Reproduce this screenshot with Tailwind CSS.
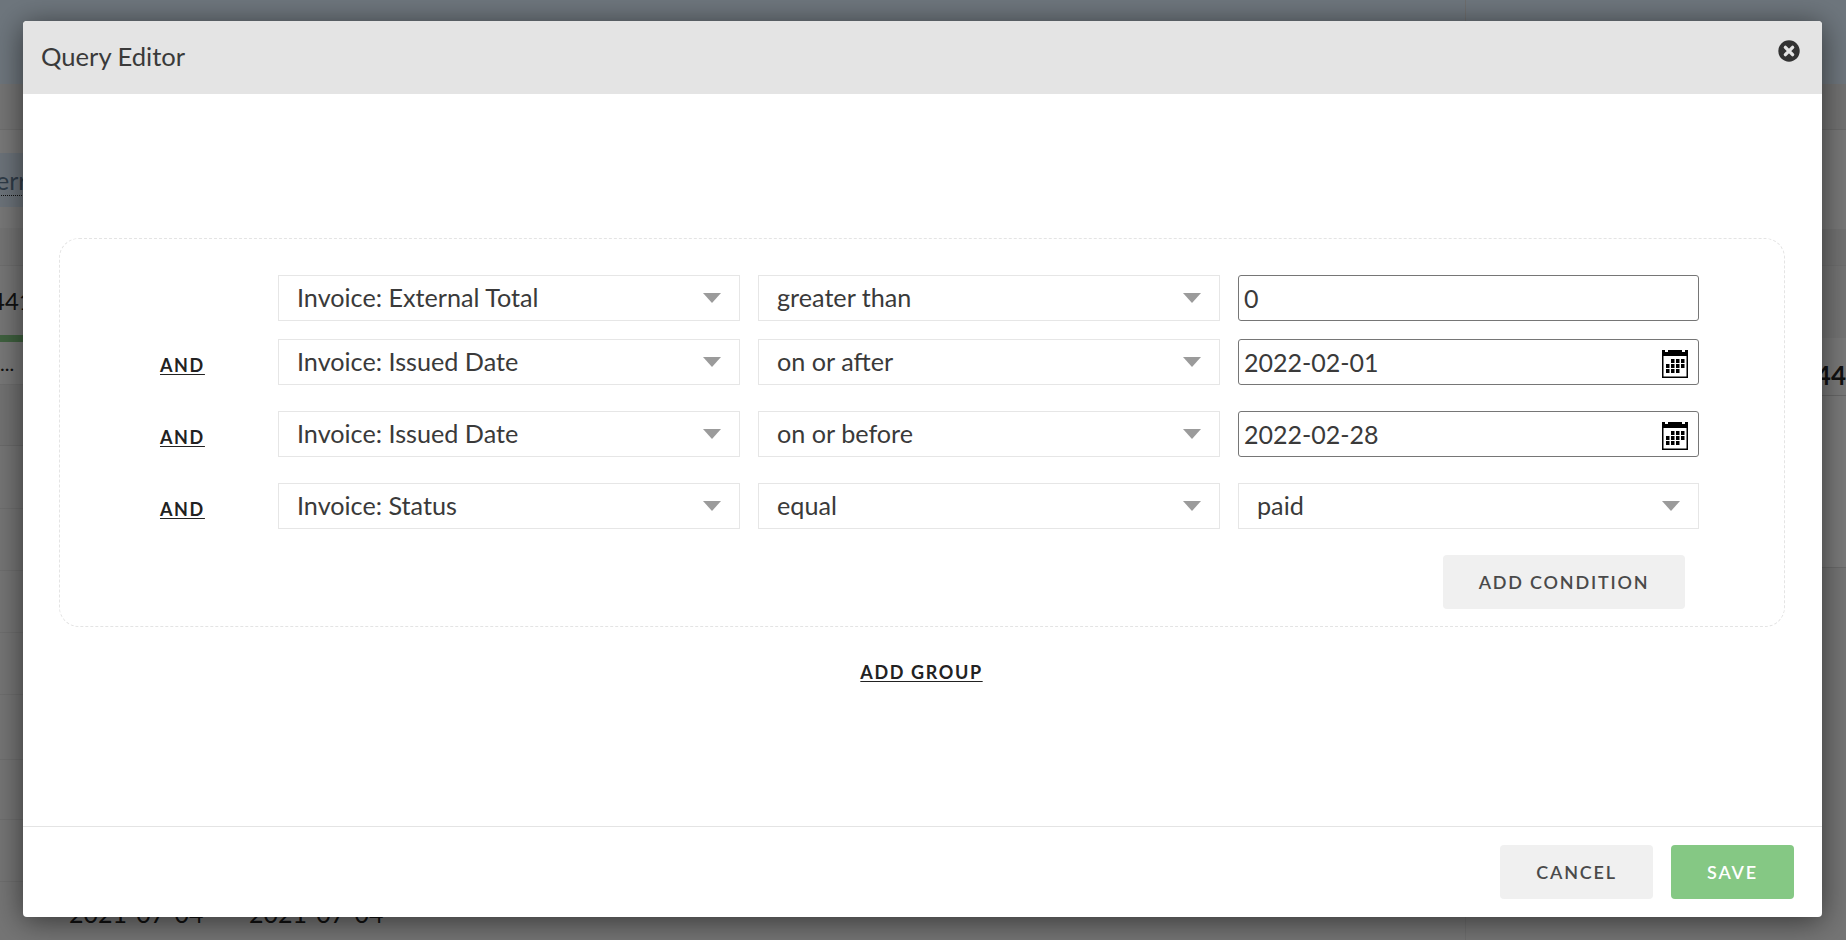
<!DOCTYPE html>
<html lang="en">
<head>
  <meta charset="UTF-8" />
  <title>Query Editor</title>
  <script src="https://cdn.jsdelivr.net/npm/@tailwindcss/browser@4"></script>
</head>
<body class="relative w-[1846px] h-[940px] overflow-hidden bg-[#ebebeb] font-['Lato',sans-serif] text-[#333]">
  <!-- page behind the modal -->
  <div class="flex h-full">
    <main class="w-[1465px] flex flex-col">
      <div class="h-[84px] shrink-0 bg-[#dcecfb]"></div>
      <div class="h-[46px] shrink-0 bg-[#ebebeb] border-b border-[#dcdcdc]"></div>
      <div class="h-[23px] shrink-0 bg-[#f2f2f2]"></div>
      <div class="h-[54px] shrink-0 bg-[#d8e6f5] overflow-hidden flex items-center">
        <span class="-ml-[4px] w-[40px] text-[25px] text-[#5f7890] border-b border-dotted border-[#222] leading-[30px]">err</span>
      </div>
      <div class="h-[21px] shrink-0 bg-[#f0f0f0]"></div>
      <div class="h-[38px] shrink-0 bg-[#e8e8e8] border-b border-[#dcdcdc]"></div>
      <div class="h-[69px] shrink-0 bg-[#ececec] overflow-hidden flex items-center pt-[1px]">
        <span class="-ml-[9px] text-[24px] text-[#222]">441</span>
      </div>
      <div class="h-[7px] shrink-0 bg-[#7fc27f]"></div>
      <div class="h-[43px] shrink-0 bg-[#f0f0f0] border-b border-[#dcdcdc] overflow-hidden flex items-center">
        <span class="text-[20px] leading-none text-[#222]">...</span>
      </div>
      <div class="h-[61px] shrink-0 bg-[#e4e4e4] border-b border-[#d4d4d4]"></div>
      <div class="h-[63px] shrink-0 border-b border-[#dcdcdc]"></div>
      <div class="h-[62px] shrink-0 border-b border-[#dcdcdc]"></div>
      <div class="h-[62px] shrink-0 border-b border-[#dcdcdc]"></div>
      <div class="h-[62px] shrink-0 border-b border-[#dcdcdc]"></div>
      <div class="h-[65px] shrink-0 border-b border-[#dcdcdc]"></div>
      <div class="h-[60px] shrink-0 border-b border-[#dcdcdc]"></div>
      <div class="h-[62px] shrink-0 border-b border-[#dcdcdc]"></div>
      <div class="flex-1 flex text-[25px] text-[#222] pt-[13px]">
        <span class="ml-[69px] w-[180px]">2021-07-04</span>
        <span>2021-07-04</span>
      </div>
    </main>
    <aside class="flex-1 flex flex-col border-l border-[#dcdcdc]">
      <div class="h-[84px] shrink-0 bg-[#dcecfb]"></div>
      <div class="h-[46px] shrink-0 bg-[#e4e4e4] border-b border-[#d4d4d4]"></div>
      <div class="h-[99px] shrink-0 bg-[#f0f0f0]"></div>
      <div class="h-[37px] shrink-0 bg-[#e4e4e4] border-b border-[#dcdcdc]"></div>
      <div class="h-[72px] shrink-0 bg-[#e8e8e8]"></div>
      <div class="h-[58px] shrink-0 bg-[#f2f2f2] border-b border-[#cfcfcf] overflow-hidden flex items-center justify-end pt-[18px]">
        <span class="text-[26px] font-bold text-[#222] whitespace-nowrap">44</span>
      </div>
      <div class="h-[172px] shrink-0 bg-[#f4f4f4] border-b border-[#d4d4d4]"></div>
      <div class="flex-1 bg-[#ebebeb]"></div>
    </aside>
  </div>
  <div class="absolute inset-0 bg-black/50"></div>

  <!-- modal -->
  <section class="absolute left-[23px] top-[21px] w-[1799px] h-[896px] flex flex-col bg-white rounded-[4px] overflow-hidden shadow-[0_4px_30px_rgba(0,0,0,0.55)]">
    <header class="h-[73px] shrink-0 bg-[#e4e4e4] flex justify-between pl-[18px] pr-[22px]">
      <h1 class="text-[25.6px] leading-[71px] text-[#3a3a3a]">Query Editor</h1>
      <button class="mt-[19px] w-[22px] h-[22px]" aria-label="Close">
        <svg viewBox="0 0 22 22" class="w-[22px] h-[22px]">
          <circle cx="11" cy="11" r="10.7" fill="#333" />
          <path d="M7.4 7.4l7.2 7.2M14.6 7.4l-7.2 7.2" stroke="#e4e4e4" stroke-width="3.4" stroke-linecap="round" />
        </svg>
      </button>
    </header>

    <div class="flex-1 pt-[144px] pl-[36px]">
      <div class="w-[1726px] h-[389px] border border-dashed border-[#e4e4e4] rounded-[20px] pt-[36px]">
        <div class="flex items-center">
          <div class="w-[218px] shrink-0"></div>
          <div class="flex gap-[18px]">
            <div class="relative w-[462px] h-[46px]">
              <select class="appearance-none w-full h-full border border-[#e6e6e6] pl-[18px] text-[25.2px] text-[#3a3a3a] bg-white"><option>Invoice: External Total</option></select>
              <svg viewBox="0 0 18 10" class="absolute right-[19px] top-[18px] w-[18px] h-[10px]"><path d="M0 0h18L9 10z" fill="#9b9b9b" /></svg>
            </div>
            <div class="relative w-[462px] h-[46px]">
              <select class="appearance-none w-full h-full border border-[#e6e6e6] pl-[18px] text-[25.2px] text-[#3a3a3a] bg-white"><option>greater than</option></select>
              <svg viewBox="0 0 18 10" class="absolute right-[19px] top-[18px] w-[18px] h-[10px]"><path d="M0 0h18L9 10z" fill="#9b9b9b" /></svg>
            </div>
            <input value="0" class="w-[461px] h-[46px] border border-[#767676] rounded-[3px] pl-[5px] text-[25px] text-[#3a3a3a]" />
          </div>
        </div>

        <div class="flex items-center mt-[18px]">
          <a class="w-[218px] shrink-0 pl-[100px] pt-[7px] text-[18px] font-bold tracking-[0.09em] underline underline-offset-2 text-[#222]">AND</a>
          <div class="flex gap-[18px]">
            <div class="relative w-[462px] h-[46px]">
              <select class="appearance-none w-full h-full border border-[#e6e6e6] pl-[18px] text-[25.2px] text-[#3a3a3a] bg-white"><option>Invoice: Issued Date</option></select>
              <svg viewBox="0 0 18 10" class="absolute right-[19px] top-[18px] w-[18px] h-[10px]"><path d="M0 0h18L9 10z" fill="#9b9b9b" /></svg>
            </div>
            <div class="relative w-[462px] h-[46px]">
              <select class="appearance-none w-full h-full border border-[#e6e6e6] pl-[18px] text-[25.2px] text-[#3a3a3a] bg-white"><option>on or after</option></select>
              <svg viewBox="0 0 18 10" class="absolute right-[19px] top-[18px] w-[18px] h-[10px]"><path d="M0 0h18L9 10z" fill="#9b9b9b" /></svg>
            </div>
            <div class="relative w-[461px] h-[46px]">
              <input value="2022-02-01" class="w-full h-full border border-[#767676] rounded-[3px] pl-[5px] text-[25px] text-[#3a3a3a]" />
              <svg viewBox="0 0 26 29" class="absolute right-[11px] top-[10px] w-[26px] h-[29px]">
                <path d="M0 1h3v2h3V1h14v2h3V1h3v28H0z" fill="#000" />
                <rect x="1.500" y="7" width="23" height="20.500" fill="#fff" />
                <path d="M9 10h3.500v4H9zM14 10h3.500v4H14zM19 10h3.500v4H19zM4 15h3.500v4H4zM9 15h3.500v4H9zM14 15h3.500v4H14zM19 15h3.500v4H19zM4 20h3.500v4H4zM9 20h3.500v4H9zM14 20h3.500v4H14z" fill="#000" />
              </svg>
            </div>
          </div>
        </div>

        <div class="flex items-center mt-[26px]">
          <a class="w-[218px] shrink-0 pl-[100px] pt-[7px] text-[18px] font-bold tracking-[0.09em] underline underline-offset-2 text-[#222]">AND</a>
          <div class="flex gap-[18px]">
            <div class="relative w-[462px] h-[46px]">
              <select class="appearance-none w-full h-full border border-[#e6e6e6] pl-[18px] text-[25.2px] text-[#3a3a3a] bg-white"><option>Invoice: Issued Date</option></select>
              <svg viewBox="0 0 18 10" class="absolute right-[19px] top-[18px] w-[18px] h-[10px]"><path d="M0 0h18L9 10z" fill="#9b9b9b" /></svg>
            </div>
            <div class="relative w-[462px] h-[46px]">
              <select class="appearance-none w-full h-full border border-[#e6e6e6] pl-[18px] text-[25.2px] text-[#3a3a3a] bg-white"><option>on or before</option></select>
              <svg viewBox="0 0 18 10" class="absolute right-[19px] top-[18px] w-[18px] h-[10px]"><path d="M0 0h18L9 10z" fill="#9b9b9b" /></svg>
            </div>
            <div class="relative w-[461px] h-[46px]">
              <input value="2022-02-28" class="w-full h-full border border-[#767676] rounded-[3px] pl-[5px] text-[25px] text-[#3a3a3a]" />
              <svg viewBox="0 0 26 29" class="absolute right-[11px] top-[10px] w-[26px] h-[29px]">
                <path d="M0 1h3v2h3V1h14v2h3V1h3v28H0z" fill="#000" />
                <rect x="1.500" y="7" width="23" height="20.500" fill="#fff" />
                <path d="M9 10h3.500v4H9zM14 10h3.500v4H14zM19 10h3.500v4H19zM4 15h3.500v4H4zM9 15h3.500v4H9zM14 15h3.500v4H14zM19 15h3.500v4H19zM4 20h3.500v4H4zM9 20h3.500v4H9zM14 20h3.500v4H14z" fill="#000" />
              </svg>
            </div>
          </div>
        </div>

        <div class="flex items-center mt-[26px]">
          <a class="w-[218px] shrink-0 pl-[100px] pt-[7px] text-[18px] font-bold tracking-[0.09em] underline underline-offset-2 text-[#222]">AND</a>
          <div class="flex gap-[18px]">
            <div class="relative w-[462px] h-[46px]">
              <select class="appearance-none w-full h-full border border-[#e6e6e6] pl-[18px] text-[25.2px] text-[#3a3a3a] bg-white"><option>Invoice: Status</option></select>
              <svg viewBox="0 0 18 10" class="absolute right-[19px] top-[18px] w-[18px] h-[10px]"><path d="M0 0h18L9 10z" fill="#9b9b9b" /></svg>
            </div>
            <div class="relative w-[462px] h-[46px]">
              <select class="appearance-none w-full h-full border border-[#e6e6e6] pl-[18px] text-[25.2px] text-[#3a3a3a] bg-white"><option>equal</option></select>
              <svg viewBox="0 0 18 10" class="absolute right-[19px] top-[18px] w-[18px] h-[10px]"><path d="M0 0h18L9 10z" fill="#9b9b9b" /></svg>
            </div>
            <div class="relative w-[461px] h-[46px]">
              <select class="appearance-none w-full h-full border border-[#e6e6e6] pl-[18px] text-[25.2px] text-[#3a3a3a] bg-white"><option>paid</option></select>
              <svg viewBox="0 0 18 10" class="absolute right-[19px] top-[18px] w-[18px] h-[10px]"><path d="M0 0h18L9 10z" fill="#9b9b9b" /></svg>
            </div>
          </div>
        </div>

        <div class="flex justify-end mt-[26px] mr-[99px]">
          <button class="w-[242px] h-[54px] bg-[#f0f0f0] rounded-[4px] text-[18px] font-semibold tracking-[0.1em] text-[#4a4a4a]">ADD CONDITION</button>
        </div>
      </div>

      <div class="w-[1725px] mt-[32px] text-center">
        <a class="text-[18px] font-bold tracking-[0.09em] underline underline-offset-2 text-[#222]">ADD GROUP</a>
      </div>
    </div>

    <footer class="h-[91px] shrink-0 border-t border-[#e4e4e4] flex justify-end gap-[18px] pt-[18px] pr-[28px]">
      <button class="w-[153px] h-[54px] bg-[#f0f0f0] rounded-[4px] text-[18px] font-semibold tracking-[0.1em] text-[#4a4a4a]">CANCEL</button>
      <button class="w-[123px] h-[54px] bg-[#85c884] rounded-[4px] text-[18px] font-semibold tracking-[0.1em] text-white">SAVE</button>
    </footer>
  </section>
</body>
</html>
